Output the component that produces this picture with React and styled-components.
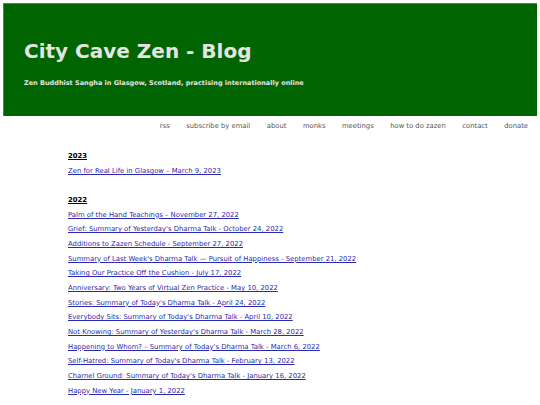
import React from 'react';
import styled, { createGlobalStyle } from 'styled-components';

const GlobalStyle = createGlobalStyle`
  body {
    margin: 3px;
    background: #fff;
    font-family: "DejaVu Sans", Verdana, sans-serif;
  }
`;

const Header = styled.header`
  background: #006400;
  border-top: 1px solid #4a8a4a;
  border-left: 1px solid #4a8a4a;
  height: 112px;
  padding: 6px 20px 0;
  box-sizing: border-box;
  height: 113px;
  display: flex;
  flex-direction: column;
  justify-content: center;
  color: #e4e4e4;
`;

const Title = styled.h1`
  margin: 0;
  font-size: 20px;
  font-weight: bold;
  line-height: 24px;
`;

const Tagline = styled.p`
  margin: 16px 0 0;
  font-size: 6.5px;
  font-weight: bold;
`;

const Nav = styled.nav`
  display: flex;
  justify-content: flex-end;
  gap: 16.5px;
  padding: 6px 9px 0 0;
  font-size: 6.8px;
`;

const NavLink = styled.a`
  color: #555;
  text-decoration: none;
`;

const Main = styled.main`
  padding: 22px 0 0 65px;
`;

const Year = styled.h2`
  margin: 0 0 7px;
  font-size: 6.85px;
  font-weight: bold;
  text-decoration: underline;
  color: #000;
`;

const Section = styled.section`
  margin-bottom: 20px;
`;

const List = styled.ul`
  list-style: none;
  margin: 0;
  padding: 0;
  display: flex;
  flex-direction: column;
  gap: 6px;
`;

const PostLink = styled.a`
  color: #2a2ab0;
  font-size: 6.85px;
  line-height: 8.67px;
  display: block;
`;

const navItems = ['rss', 'subscribe by email', 'about', 'monks', 'meetings', 'how to do zazen', 'contact', 'donate'];

const years = [
  { year: '2023', posts: ['Zen for Real Life in Glasgow – March 9, 2023'] },
  {
    year: '2022',
    posts: [
      'Palm of the Hand Teachings – November 27, 2022',
      "Grief: Summary of Yesterday's Dharma Talk - October 24, 2022",
      'Additions to Zazen Schedule - September 27, 2022',
      "Summary of Last Week's Dharma Talk — Pursuit of Happiness - September 21, 2022",
      'Taking Our Practice Off the Cushion - July 17, 2022',
      'Anniversary: Two Years of Virtual Zen Practice - May 10, 2022',
      "Stories: Summary of Today's Dharma Talk - April 24, 2022",
      "Everybody Sits: Summary of Today's Dharma Talk - April 10, 2022",
      "Not Knowing: Summary of Yesterday's Dharma Talk - March 28, 2022",
      "Happening to Whom? – Summary of Today's Dharma Talk - March 6, 2022",
      "Self-Hatred: Summary of Today's Dharma Talk - February 13, 2022",
      "Charnel Ground: Summary of Today's Dharma Talk - January 16, 2022",
      'Happy New Year - January 1, 2022',
    ],
  },
];

export default function App() {
  return (
    <>
      <GlobalStyle />
      <Header>
        <Title>City Cave Zen - Blog</Title>
        <Tagline>Zen Buddhist Sangha in Glasgow, Scotland, practising internationally online</Tagline>
      </Header>
      <Nav>
        {navItems.map((item) => (
          <NavLink key={item} href="#">{item}</NavLink>
        ))}
      </Nav>
      <Main>
        {years.map((y) => (
          <Section key={y.year}>
            <Year>{y.year}</Year>
            <List>
              {y.posts.map((p) => (
                <li key={p}>
                  <PostLink href="#">{p}</PostLink>
                </li>
              ))}
            </List>
          </Section>
        ))}
      </Main>
    </>
  );
}
